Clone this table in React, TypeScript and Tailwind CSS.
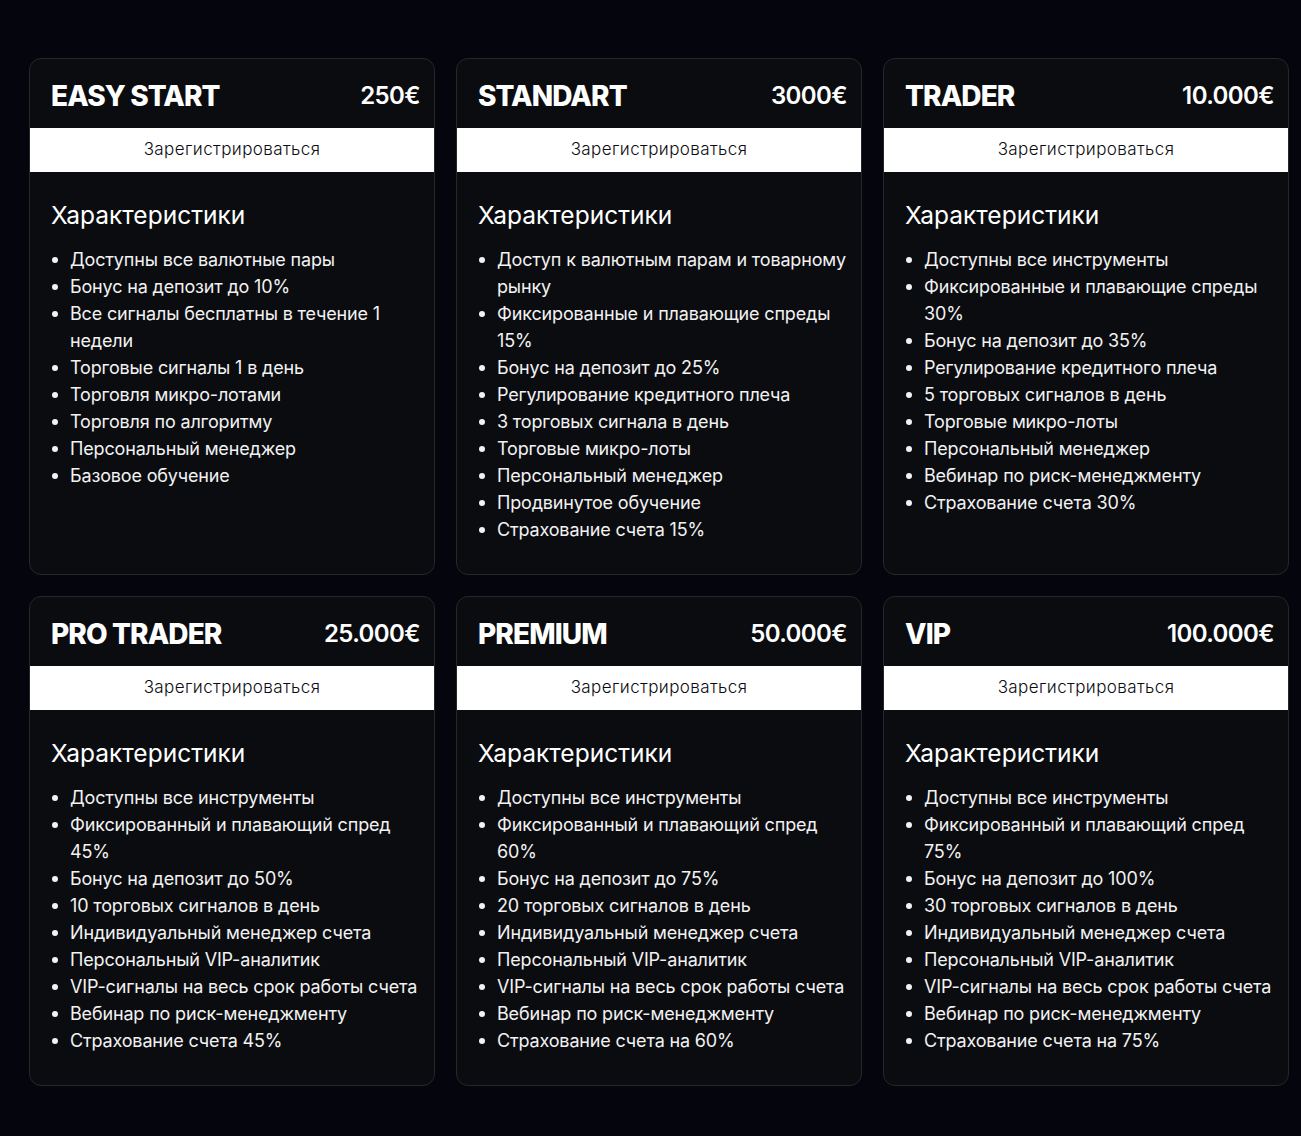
import React from "react";

type Plan = { name: string; price: string; items: string[] };

const plans: Plan[] = [
  {
    name: "EASY START",
    price: "250€",
    items: [
      "Доступны все валютные пары",
      "Бонус на депозит до 10%",
      "Все сигналы бесплатны в течение 1 недели",
      "Торговые сигналы 1 в день",
      "Торговля микро-лотами",
      "Торговля по алгоритму",
      "Персональный менеджер",
      "Базовое обучение",
    ],
  },
  {
    name: "STANDART",
    price: "3000€",
    items: [
      "Доступ к валютным парам и товарному рынку",
      "Фиксированные и плавающие спреды 15%",
      "Бонус на депозит до 25%",
      "Регулирование кредитного плеча",
      "3 торговых сигнала в день",
      "Торговые микро-лоты",
      "Персональный менеджер",
      "Продвинутое обучение",
      "Страхование счета 15%",
    ],
  },
  {
    name: "TRADER",
    price: "10.000€",
    items: [
      "Доступны все инструменты",
      "Фиксированные и плавающие спреды 30%",
      "Бонус на депозит до 35%",
      "Регулирование кредитного плеча",
      "5 торговых сигналов в день",
      "Торговые микро-лоты",
      "Персональный менеджер",
      "Вебинар по риск-менеджменту",
      "Страхование счета 30%",
    ],
  },
  {
    name: "PRO TRADER",
    price: "25.000€",
    items: [
      "Доступны все инструменты",
      "Фиксированный и плавающий спред 45%",
      "Бонус на депозит до 50%",
      "10 торговых сигналов в день",
      "Индивидуальный менеджер счета",
      "Персональный VIP-аналитик",
      "VIP-сигналы на весь срок работы счета",
      "Вебинар по риск-менеджменту",
      "Страхование счета 45%",
    ],
  },
  {
    name: "PREMIUM",
    price: "50.000€",
    items: [
      "Доступны все инструменты",
      "Фиксированный и плавающий спред 60%",
      "Бонус на депозит до 75%",
      "20 торговых сигналов в день",
      "Индивидуальный менеджер счета",
      "Персональный VIP-аналитик",
      "VIP-сигналы на весь срок работы счета",
      "Вебинар по риск-менеджменту",
      "Страхование счета на 60%",
    ],
  },
  {
    name: "VIP",
    price: "100.000€",
    items: [
      "Доступны все инструменты",
      "Фиксированный и плавающий спред 75%",
      "Бонус на депозит до 100%",
      "30 торговых сигналов в день",
      "Индивидуальный менеджер счета",
      "Персональный VIP-аналитик",
      "VIP-сигналы на весь срок работы счета",
      "Вебинар по риск-менеджменту",
      "Страхование счета на 75%",
    ],
  },
];

function Card({ plan }: { plan: Plan }) {
  return (
    <div className="flex flex-col rounded-xl border border-[#26272b] bg-[#0b0c10] overflow-hidden">
      <div className="flex h-[69px] items-center justify-between pl-[21px] pr-[14px] pt-[5px] text-white">
        <span className="font-['Inter',sans-serif] text-[28px] font-extrabold leading-none tracking-[-0.9px]">
          {plan.name}
        </span>
        <span className="font-['Inter',sans-serif] text-[24px] font-semibold leading-none tracking-[-0.6px]">
          {plan.price}
        </span>
      </div>
      <button className="flex h-[44px] w-full items-center justify-center bg-white font-['Inter',sans-serif] text-[17px] font-light tracking-[0.4px] text-[#0b0c10]">
        Зарегистрироваться
      </button>
      <div className="pl-[21px] pr-[8px] pt-[27px] pb-[31px]">
        <h3 className="font-['Inter',sans-serif] text-[24.5px] font-normal leading-[32px] text-white">
          Характеристики
        </h3>
        <ul className="mt-[15px] flex flex-col font-['Inter',sans-serif] text-[18px] leading-[27px] tracking-[-0.16px] text-[#f2f2f2]">
          {plan.items.map((it, i) => (
            <li key={i} className="flex">
              <span className="flex h-[27px] w-[19px] shrink-0 items-center">
                <span className="ml-[1px] h-[6px] w-[6px] rounded-full bg-[#f2f2f2]" />
              </span>
              <span>{it}</span>
            </li>
          ))}
        </ul>
      </div>
    </div>
  );
}

export default function App() {
  return (
    <div className="min-h-[1136px] w-full bg-[#04050d] pl-[29px] pt-[58px] pb-[50px]">
      <div className="grid w-[1260px] grid-cols-3 gap-x-[21px] gap-y-[21px]">
        {plans.map((p) => (
          <Card key={p.name} plan={p} />
        ))}
      </div>
    </div>
  );
}
